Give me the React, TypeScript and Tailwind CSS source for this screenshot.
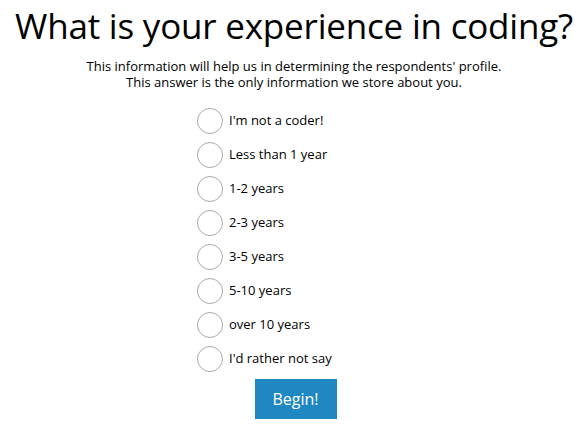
import { useState } from "react";

const OPTIONS = [
  "I'm not a coder!",
  "Less than 1 year",
  "1-2 years",
  "2-3 years",
  "3-5 years",
  "5-10 years",
  "over 10 years",
  "I'd rather not say",
];

export default function App() {
  const [choice, setChoice] = useState<string | null>(null);

  return (
    <div className="w-[588px] h-[434px] bg-white text-black font-['Segoe_UI','Open_Sans',sans-serif] flex flex-col items-center">
      <h1 className="mt-[3px] text-[35px] leading-[46px] font-normal tracking-[-0.2px]">What is your experience in coding?</h1>
      <p className="mt-[9px] text-[13px] leading-[16px] text-center">
        This information will help us in determining the respondents' profile.
        <br />
        This answer is the only information we store about you.
      </p>

      <div className="mt-[18px] w-[194px] flex flex-col gap-[8px]">
        {OPTIONS.map((o) => (
          <label key={o} className="flex items-center gap-[6px] h-[26px] cursor-pointer">
            <span
              onClick={() => setChoice(o)}
              className="w-[26px] h-[26px] rounded-full border border-[#aaa] bg-white flex items-center justify-center shrink-0"
            >
              {choice === o && <span className="w-[14px] h-[14px] rounded-full bg-[#1f88c2]" />}
            </span>
            <span className="text-[13px]">{o}</span>
          </label>
        ))}
      </div>

      <button className="mt-[7px] ml-[3px] w-[82px] h-[40px] bg-[#1f88c2] text-white text-[16px]">Begin!</button>
    </div>
  );
}
